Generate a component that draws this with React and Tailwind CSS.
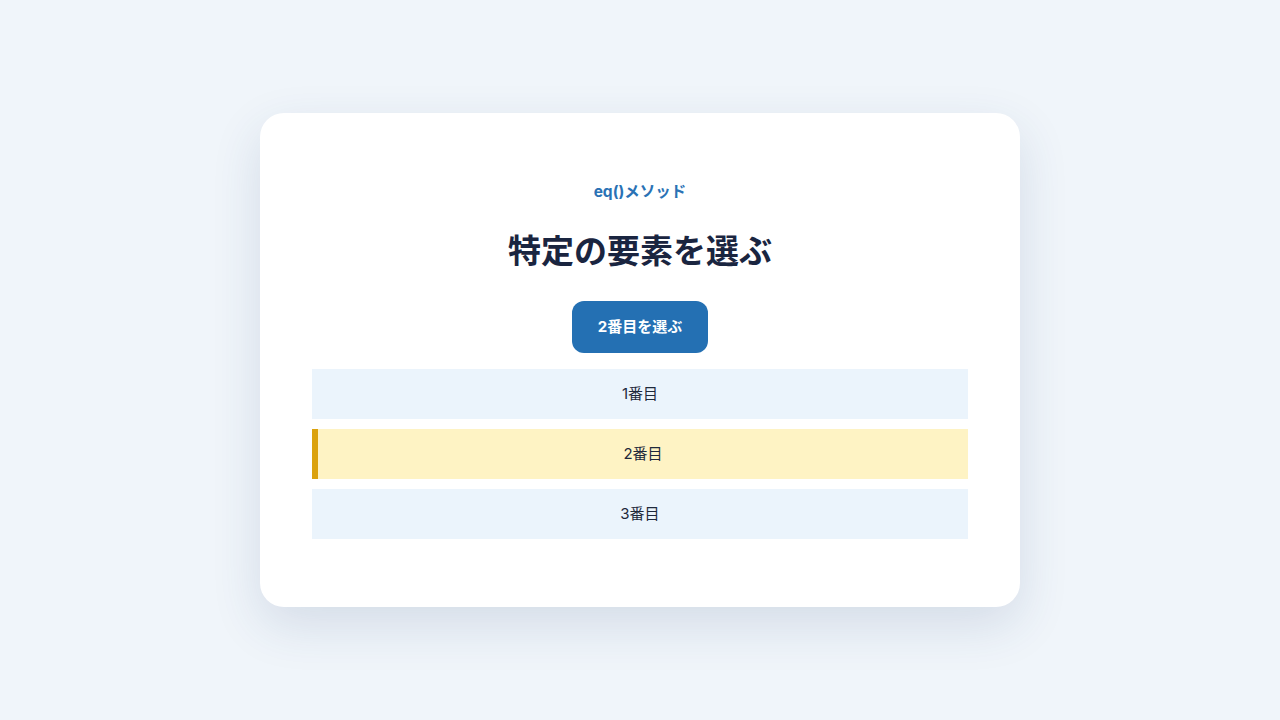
import { useState } from 'react'

const ITEMS = ['1番目', '2番目', '3番目']

export default function App() {
	const [selected, setSelected] = useState(1)

	return (
		<div className="min-h-screen w-full bg-[#f0f5fa] flex items-center justify-center font-['Inter','Noto_Sans_CJK_JP',sans-serif]">
			<div className="w-[760px] bg-white rounded-[24px] px-[52px] pt-[68px] pb-[68px] shadow-[0_18px_50px_rgba(40,70,120,0.14)] text-center">
				<p className="text-[15.5px] leading-5 font-bold text-[#2a72b5] translate-y-[1px]">eq()メソッド</p>
				<h1 className="mt-8 text-[33px] leading-9 font-bold text-[#1a2540]">特定の要素を選ぶ</h1>
				<button
					onClick={() => setSelected(1)}
					className="mt-8 h-[52px] w-[136px] rounded-xl bg-[#2470b3] text-white text-[15px] font-bold cursor-pointer"
				>
					2番目を選ぶ
				</button>
				{/* list items; the chosen one gets the yellow highlight */}
				<ul className="mt-4 flex flex-col gap-[10px]">
					{ITEMS.map((label, i) => (
						<li
							key={label}
							className={`h-[50px] flex items-center justify-center text-[15px] text-[#1e293b] ${
								i === selected
									? 'bg-[#fef3c4] border-l-[6px] border-[#dba20d]'
									: 'bg-[#ebf4fc]'
							}`}
						>
							{label}
						</li>
					))}
				</ul>
			</div>
		</div>
	)
}
